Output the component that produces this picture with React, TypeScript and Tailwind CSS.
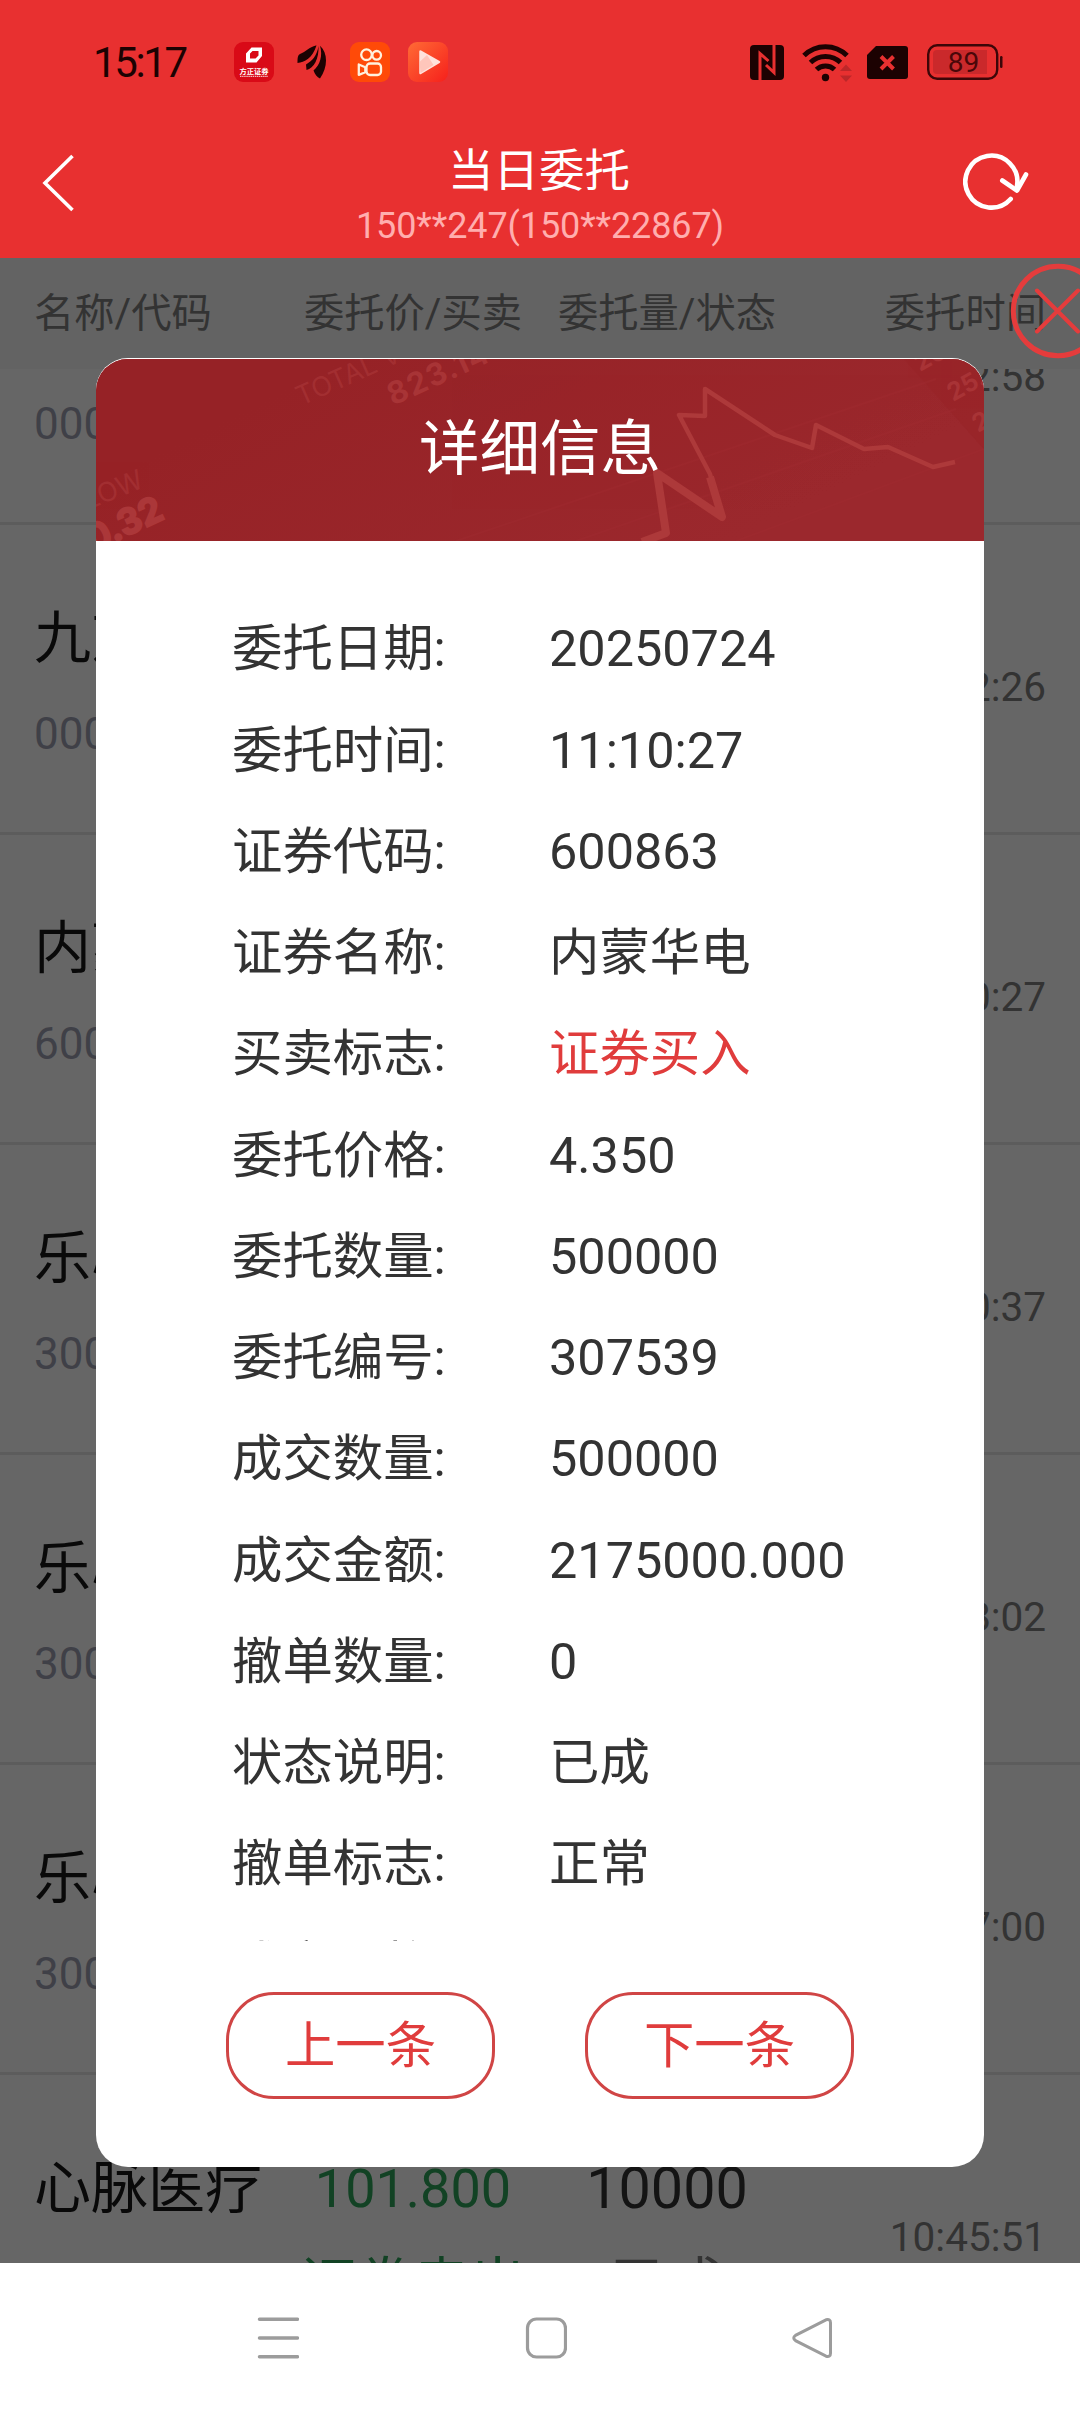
import { Fragment } from "react"

const columns = ["名称/代码", "委托价/买卖", "委托量/状态", "委托时间"]

type Order = {
  name: string
  code: string
  price?: string
  side?: string
  amount?: string
  status?: string
  time: string
}

const orders: Order[] = [
  { name: "", code: "000", time: "11:12:58" },
  { name: "九芝", code: "000", time: "11:12:26" },
  { name: "内蒙", code: "600", time: "11:10:27" },
  { name: "乐心", code: "300", time: "11:00:37" },
  { name: "乐心", code: "300", time: "10:58:02" },
  { name: "乐心", code: "300", time: "10:57:00" },
  { name: "心脉医疗", code: "", price: "101.800", side: "证券卖出", amount: "10000", status: "已成", time: "10:45:51" },
]

const details = [
  { label: "委托日期", value: "20250724" },
  { label: "委托时间", value: "11:10:27" },
  { label: "证券代码", value: "600863" },
  { label: "证券名称", value: "内蒙华电" },
  { label: "买卖标志", value: "证券买入", highlight: true },
  { label: "委托价格", value: "4.350" },
  { label: "委托数量", value: "500000" },
  { label: "委托编号", value: "307539" },
  { label: "成交数量", value: "500000" },
  { label: "成交金额", value: "2175000.000" },
  { label: "撤单数量", value: "0" },
  { label: "状态说明", value: "已成" },
  { label: "撤单标志", value: "正常" },
  { label: "成交价格", value: "" },
]

function StatusBar() {
  return (
    <div className="flex h-[124px] items-center pl-[93px] pr-[76px] text-[#1c0202]">
      <span className="mt-[2px] w-[141px] text-[42px] leading-none tracking-[-2.4px]">15:17</span>

      <div className="flex items-center">
        <svg className="size-10" viewBox="0 0 40 40">
          <rect width="40" height="40" rx="9" fill="#d90a17" />
          <path fillRule="evenodd" fill="#fff" d="M17.500 5.500H28v8.500l-5.500 6.500H12V11.500zM18.500 9l-2.500 2.500v5h5.500l3-3V9z" />
          <text x="20" y="31.500" fill="#fff" fontSize="7.300" fontWeight="700" textAnchor="middle">方正证券</text>
          <path d="M6 34.300h28" stroke="#fff" strokeOpacity=".7" strokeWidth="1.200" strokeDasharray="1.500 .6" />
        </svg>
        <svg className="ml-[23px] h-[34px] w-[31px]" viewBox="0 0 31 34" fill="currentColor">
          <path d="M19 .5C12 2 9 7 3 9 1 10 .5 12 .5 18c7-.5 15-5 19-17.500z" />
          <path d="M21.500 1C20 11 15 16 9 19.500l.5 5.500C17 23 22 14 21.500 1z" />
          <path d="M23 .8C26 11 23 20 16.500 25.500c1.500 4 3.500 6.500 6.500 8C31 22 31 8 23 .8z" />
        </svg>
        <svg className="ml-[22px] size-10" viewBox="0 0 40 40">
          <rect width="40" height="40" rx="9" fill="#ff4a08" />
          <g fill="none" stroke="#fff1dd" strokeWidth="2.300" strokeLinejoin="round">
            <circle cx="16.500" cy="12.700" r="5.300" />
            <circle cx="26.700" cy="13.300" r="4.300" />
            <rect x="16.500" y="21.500" width="14.500" height="11.500" rx="3.500" />
            <path d="M8.800 22.500l6.500 2.700v5l-6.500 2.700z" />
          </g>
        </svg>
        <svg className="ml-[18px] size-10" viewBox="0 0 40 40">
          <defs>
            <linearGradient id="playBg" x1="0" y1="0" x2="1" y2="1">
              <stop offset="0" stopColor="#ff6b35" />
              <stop offset="1" stopColor="#f6201c" />
            </linearGradient>
          </defs>
          <rect width="40" height="40" rx="9" fill="url(#playBg)" />
          <path d="M12.500 9.500L31 20 12.500 31z" fill="#ffe3dc" stroke="#ffe3dc" strokeWidth="2.500" strokeLinejoin="round" />
          <path d="M11.500 20l7.500-7 6.500 10-13 8z" fill="#ffb9ac" opacity=".7" />
        </svg>
      </div>

      <div className="ml-auto flex items-center">
        <svg className="h-[35px] w-[34px]" viewBox="0 0 34 35">
          <rect width="34" height="35" rx="4" fill="currentColor" />
          <path d="M10 35V8.500l8.500 7.500M24 0v27.500l-8-7.500" fill="none" stroke="#e83030" strokeWidth="3" />
        </svg>
        <svg className="ml-[18px] h-[40px] w-[52px]" viewBox="0 0 52 40">
          <g fill="none" stroke="currentColor" strokeWidth="5">
            <path d="M2 13.500a30.500 30.500 0 0 1 43 0" />
            <path d="M8.500 20.500a21.500 21.500 0 0 1 30 0" />
            <path d="M14.500 27.500a13 13 0 0 1 18 0" />
          </g>
          <circle cx="23.500" cy="35.500" r="3.700" fill="currentColor" />
          <path d="M38 29l6-6.500 6 6.500zM38 33.500h12L44 40z" fill="#bd2729" />
        </svg>
        <svg className="ml-[13px] h-[33px] w-[41px]" viewBox="0 0 41 33">
          <path d="M9 0h29a3 3 0 0 1 3 3v27a3 3 0 0 1-3 3H3a3 3 0 0 1-3-3V9z" fill="currentColor" />
          <path d="M14 10.500l12.500 12.500M26.500 10.500L14 23" stroke="#e83030" strokeWidth="4" />
        </svg>
        <svg className="ml-[19px] h-[36px] w-[77px]" viewBox="0 0 77 36">
          <rect x="1.200" y="1.200" width="69" height="33.600" rx="9" fill="none" stroke="#3d0608" strokeWidth="2.400" />
          <path d="M10 6h50v24H10a4 4 0 0 1-4-4V10a4 4 0 0 1 4-4z" fill="#ca292b" />
          <rect x="73" y="12" width="2.500" height="12" rx="1.200" fill="#3d0608" />
          <text x="36.500" y="28" fontSize="28" textAnchor="middle" fill="#4a0709">89</text>
        </svg>
      </div>
    </div>
  )
}

function TitleBar() {
  return (
    <div className="grid h-[134px] grid-cols-[1fr_auto_1fr] items-start pl-[42px] pr-[51px] text-white">
      <svg className="mt-[30px] h-[58px] w-[34px]" viewBox="0 0 34 58" fill="none" stroke="currentColor" strokeWidth="3.600">
        <path d="M30.500 2L3 29l27.500 27" />
      </svg>
      <div className="ml-[9px] flex flex-col items-center">
        <h1 className="mr-[2px] mt-[18px] text-[45.500px] leading-[60px]">当日委托</h1>
        <p className="mt-[3px] text-[36px] leading-[42px] tracking-[-0.1px] text-[#ffaeae]">150**247(150**22867)</p>
      </div>
      <svg
        className="mt-[29px] h-[60px] w-[66px] justify-self-end"
        viewBox="0 0 66 60"
        fill="none"
        stroke="currentColor"
        strokeWidth="4.600"
        strokeLinecap="round"
        strokeLinejoin="round"
      >
        <path d="M47.700 46A26 26 0 1 1 54 33" />
        <path d="M39.300 27.500L54 37.500l9-16" />
      </svg>
    </div>
  )
}

function OrderRow({ order }: { order: Order }) {
  return (
    <div className="flex h-[310px] shrink-0 border-b-[3px] border-[#e6e6e6] pr-[34px]">
      <div className="w-[286px] shrink-0 pl-[34px] pt-[74px]">
        <div className="h-[80px] whitespace-nowrap text-[57px] leading-[80px] text-[#171717]">{order.name}</div>
        <div className="mt-[23px] text-[44px] leading-[64px] text-[#9ea0b2]">{order.code}</div>
      </div>
      <div className="flex w-[254px] shrink-0 flex-col items-center pt-[74px] text-[#2da55a]">
        <div className="text-[54px] leading-[80px]">{order.price}</div>
        <div className="mt-[16px] whitespace-nowrap text-[56.500px] leading-[80px]">{order.side}</div>
      </div>
      <div className="flex w-[254px] shrink-0 flex-col items-center pt-[74px]">
        <div className="text-[57.500px] leading-[80px] text-[#333]">{order.amount}</div>
        <div className="mt-[16px] text-[56.500px] leading-[80px] text-[#808080]">{order.status}</div>
      </div>
      <div className="flex-1 pt-[132px] text-right text-[40.500px] leading-[60px] text-[#808080]">{order.time}</div>
    </div>
  )
}

function OrderList() {
  return (
    <div className="flex h-full flex-col bg-white">
      <div className="flex h-[111px] shrink-0 items-center bg-[#f7f7f7] pr-[34px] pt-[2px] text-[40.300px] leading-none text-[#808080]">
        <div className="w-[286px] pl-[34px]">{columns[0]}</div>
        <div className="w-[254px] text-center">{columns[1]}</div>
        <div className="w-[254px] text-center">{columns[2]}</div>
        <div className="flex-1 text-right">{columns[3]}</div>
      </div>
      <div className="min-h-0 flex-1 overflow-hidden">
        <div className="-mt-[154px] flex flex-col">
          {orders.map((order) => (
            <OrderRow key={order.time} order={order} />
          ))}
        </div>
      </div>
    </div>
  )
}

function ModalBanner() {
  return (
    <div className="relative mt-px flex h-[182px] items-center justify-center overflow-hidden rounded-t-[32px] bg-[#98252a]">
      <svg className="absolute inset-0 size-full" viewBox="0 0 888 182">
        <defs>
          <linearGradient id="bannerBg" gradientUnits="userSpaceOnUse" x1="250" y1="0" x2="400" y2="300">
            <stop offset="0" stopColor="#962226" />
            <stop offset="1" stopColor="#9b282d" />
          </linearGradient>
        </defs>
        <path d="M0 0h888v182H0z" fill="url(#bannerBg)" />
        <path d="M808 0h80v90z" fill="#962226" opacity=".4" />
        <path d="M360 182L840 20M480 182L860 50M640 182L888 90" stroke="#a02b31" strokeWidth="2" opacity=".4" />
        <g fill="none" stroke="#ad393a" strokeLinejoin="round">
          <path d="M546 183l24-9-9-60 65 44-12-40" strokeWidth="8" />
          <path d="M618 130l-4-15-31-59 26 1v-27l70 46 37 13 4-23 48 24 24-2 45 20 22-5" strokeWidth="4.500" />
        </g>
        <g fill="#ab3739" fontFamily="Inter">
          <text transform="translate(205 47) rotate(-24)" fontSize="27" opacity=".6">TOTAL V</text>
          <text transform="translate(297 47) rotate(-24.500)" fontSize="31" fontWeight="700" letterSpacing="1.500" opacity=".85">823.14</text>
          <text transform="translate(-8 151) rotate(-22)" fontSize="27" opacity=".6">LOW</text>
          <text transform="translate(-3 193) rotate(-25)" fontSize="36" fontWeight="700" stroke="#ab3739" strokeWidth="2">0.32</text>
          <text transform="translate(824 13) rotate(-29)" fontSize="25" fontWeight="700" opacity=".85">20</text>
          <text transform="translate(857 43) rotate(-29)" fontSize="25" fontWeight="700" opacity=".85">25.</text>
          <text transform="translate(882 74) rotate(-29)" fontSize="25" fontWeight="700" opacity=".85">2</text>
        </g>
      </svg>
      <h2 className="relative text-[60.500px] leading-none text-white">详细信息</h2>
    </div>
  )
}

function DetailModal() {
  return (
    <div className="absolute left-[96px] top-[358px] flex h-[1809px] w-[888px] flex-col overflow-hidden rounded-[32px] bg-white">
      <ModalBanner />
      <div className="h-[1400px] shrink-0 overflow-hidden pt-[58px]">
        <div className="grid auto-rows-[101.250px] grid-cols-[317px_1fr] items-center pl-[136px] text-[50.400px] leading-none text-[#333]">
          {details.map((item) => (
            <Fragment key={item.label}>
              <div>{item.label}:</div>
              <div className={item.highlight ? "text-[#e03c3c]" : ""}>{item.value}</div>
            </Fragment>
          ))}
        </div>
      </div>
      <div className="mt-[51px] flex justify-center gap-[90px]">
        {["上一条", "下一条"].map((label) => (
          <button
            key={label}
            className="h-[107px] w-[269px] rounded-[48px] border-[3px] border-[#d04545] pt-[2px] text-[50.400px] leading-none text-[#e03c3c]"
          >
            {label}
          </button>
        ))}
      </div>
    </div>
  )
}

function SystemNav() {
  return (
    <div className="flex h-[149px] items-center bg-white text-[#9c9c9c]">
      <svg className="ml-[257px] h-[42px] w-[42px]" viewBox="0 0 42 42" stroke="currentColor" strokeWidth="3.500" strokeLinecap="round">
        <path d="M2.500 2.300h38M2.500 21h38M2.500 39.700h38" />
      </svg>
      <svg className="ml-[226px] h-[42px] w-[42px]" viewBox="0 0 42 42" fill="none" stroke="currentColor" strokeWidth="3.200">
        <rect x="2.500" y="2" width="38" height="38" rx="9" />
      </svg>
      <svg className="ml-[224px] h-[42px] w-[42px]" viewBox="0 0 42 42" fill="none" stroke="currentColor" strokeWidth="3">
        <path d="M35 2.800L4.500 18.400q-3.500 2.600 0 5.200L35 39.200q4.500 1.200 4.500-3V5.800q0-4.200-4.500-3z" />
      </svg>
    </div>
  )
}

export default function App() {
  return (
    <div className="relative flex h-[2412px] w-[1080px] flex-col overflow-hidden bg-white font-[Roboto,'Noto_Sans_CJK_SC',sans-serif]">
      <header className="h-[258px] shrink-0 bg-[#e83030]">
        <StatusBar />
        <TitleBar />
      </header>
      <main className="relative h-[2005px] shrink-0">
        <OrderList />
        <div className="absolute inset-0 bg-black/60" />
        <svg
          className="absolute left-[1008px] top-[4px] h-[98px] w-[72px]"
          viewBox="0 0 72 98"
          fill="none"
          stroke="#e53c3c"
          strokeWidth="5"
        >
          <circle cx="50" cy="49" r="44.700" />
          <path d="M29 28.500l41 41M70 28.500l-41 41" strokeWidth="4" strokeLinecap="round" />
        </svg>
      </main>
      <SystemNav />
      <DetailModal />
    </div>
  )
}
